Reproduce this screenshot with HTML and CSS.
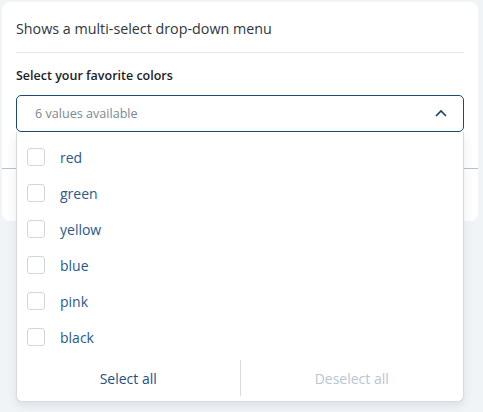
FILE: index.html
```html
<!DOCTYPE html>
<html>
<head>
<meta charset="utf-8">
<link rel="stylesheet" href="styles.css">
</head>
<body>
<div class="card">
  <div class="card-body">
    <p class="desc">Shows a multi-select drop-down menu</p>
    <hr class="divider">
    <label class="label">Select your favorite colors</label>
    <div class="select-wrap">
      <div class="select">
        <span class="placeholder">6 values available</span>
        <svg class="chevron" width="12" height="8" viewBox="0 0 12 8"><path d="M1 7 L6 2 L11 7" fill="none" stroke="#1d3f63" stroke-width="1.6"/></svg>
      </div>
      <div class="menu">
        <ul class="options">
          <li class="option"><span class="box"></span><span>red</span></li>
          <li class="option"><span class="box"></span><span>green</span></li>
          <li class="option"><span class="box"></span><span>yellow</span></li>
          <li class="option"><span class="box"></span><span>blue</span></li>
          <li class="option"><span class="box"></span><span>pink</span></li>
          <li class="option"><span class="box"></span><span>black</span></li>
        </ul>
        <div class="menu-footer">
          <button class="action">Select all</button>
          <span class="vsep"></span>
          <button class="action disabled">Deselect all</button>
        </div>
      </div>
    </div>
  </div>
  <div class="card-footer"></div>
</div>
</body>
</html>
```
FILE: styles.css
```css
* { box-sizing: border-box; }
html, body { margin: 0; padding: 0; }
body {
  background: #f1f4f7;
  font-family: "Open Sans", "Noto Sans", sans-serif;
  width: 483px;
  height: 412px;
  overflow: hidden;
  padding: 2px 5px 0 2px;
}
.card {
  background: #fff;
  border-radius: 8px;
  width: 476px;
  height: 219px;
  display: flex;
  flex-direction: column;
}
.card-body {
  padding: 17px 14px 0 14px;
  height: 166px;
}
.desc {
  margin: 0;
  font-size: 14.3px;
  line-height: 20px;
  color: #2f363d;
}
.divider {
  border: 0;
  border-top: 1px solid #e3e6ea;
  margin: 13px 0 0 0;
}
.label {
  display: block;
  margin-top: 14px;
  font-size: 12.5px;
  font-weight: 600;
  line-height: 18px;
  color: #1c2229;
}
.select-wrap {
  position: relative;
  margin-top: 10px;
}
.select {
  height: 37px;
  border: 1px solid #1d4a75;
  border-radius: 5px;
  display: flex;
  align-items: center;
  justify-content: space-between;
  padding: 0 16px 0 18px;
}
.placeholder {
  font-size: 12.6px;
  color: #7b8794;
}
.chevron { display: block; margin-top: -2px; }
.menu {
  position: absolute;
  top: 37px;
  left: 0;
  right: 0;
  background: #fff;
  border: 1px solid #d6dbe2;
  border-top: 0;
  border-radius: 0 0 6px 6px;
  box-shadow: 0 4px 10px rgba(40, 60, 90, 0.10);
  z-index: 2;
}
.options {
  list-style: none;
  margin: 0;
  padding: 7px 0 0 0;
}
.option {
  height: 36px;
  display: flex;
  align-items: center;
  padding-left: 10px;
  font-size: 14px;
  color: #275a8a;
}
.box {
  width: 18px;
  height: 18px;
  border: 1px solid #d0d7df;
  border-radius: 3px;
  margin-right: 15px;
}
.menu-footer {
  height: 46px;
  display: flex;
  align-items: center;
}
.action {
  flex: 1;
  background: none;
  border: 0;
  font-family: inherit;
  font-size: 14px;
  color: #24507e;
  padding: 0;
}
.action.disabled { color: #b8c5d3; }
.vsep {
  width: 1px;
  height: 36px;
  background: #d9dde2;
}
.card-footer {
  border-top: 1px solid #b7c0cb;
  flex: 1;
}
```
